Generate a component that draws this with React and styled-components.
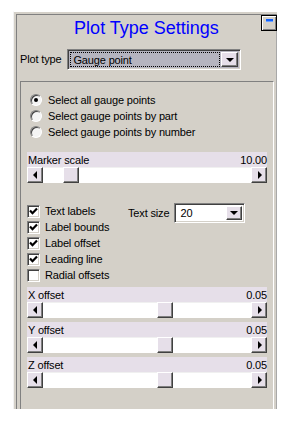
import React from "react";
import styled, { createGlobalStyle } from "styled-components";

const GlobalStyle = createGlobalStyle`
  html, body {
    margin: 0;
    padding: 0;
    background: #ffffff;
  }
  body {
    font-family: "Liberation Sans", Arial, sans-serif;
    font-size: 11px;
    letter-spacing: -0.15px;
    color: #000000;
  }
`;

const cinza = "#d4d0c8";
const lilas = "#e6dfe9";

const Janela = styled.div`
  margin: 11px 0 0 13px;
  width: 265px;
  height: 398px;
  box-sizing: border-box;
  border-top: 1px solid #ffffff;
  border-left: 1px solid #f2f2f2;
  border-right: 1px solid #ffffff;
  padding: 2px 0 0 2px;
  background: ${cinza};
  display: flex;
  flex-direction: column;
  overflow: hidden;
`;

const Interior = styled.div`
  flex: 1;
  display: flex;
  flex-direction: column;
  border-top: 1px solid #808080;
  border-left: 1px solid #808080;
  border-right: 1px solid #a8a8a8;
  box-sizing: border-box;
`;

const Cabecalho = styled.div`
  position: relative;
  padding-top: 3px;
  text-align: center;
`;

const Titulo = styled.h1`
  margin: 0;
  font-size: 18px;
  line-height: 21px;
  font-weight: normal;
  letter-spacing: 0;
  color: #0000ff;
`;

const BotaoMinimizar = styled.button`
  position: absolute;
  top: 0;
  right: -1px;
  width: 16px;
  height: 16px;
  padding: 0;
  box-sizing: border-box;
  border: 1px solid #000000;
  background: ${cinza};
  box-shadow: inset 1px 1px 0 #ffffff, inset -1px -1px 0 #808080;
  display: flex;
  justify-content: center;
  align-items: flex-start;

  &::after {
    content: "";
    display: block;
    margin-top: 3px;
    width: 7px;
    height: 3px;
    background: #1060ff;
    box-shadow: inset 0 -1px 0 #6aa0ff;
  }
`;

const LinhaTipo = styled.div`
  display: flex;
  align-items: center;
  gap: 6px;
  margin-top: 10px;
  padding-left: 3px;
`;

const Rotulo = styled.span`
  white-space: nowrap;
  line-height: 13px;
`;

const Combo = styled.div`
  display: flex;
  align-items: stretch;
  width: ${(p) => p.$largura}px;
  height: ${(p) => p.$altura}px;
  box-sizing: border-box;
  border-top: 1px solid #808080;
  border-left: 1px solid #808080;
  border-right: 1px solid #ffffff;
  border-bottom: 1px solid #ffffff;
  box-shadow: inset 1px 1px 0 #404040, inset -1px -1px 0 ${cinza};
  background: ${(p) => (p.$selecionado ? "#b5b4bf" : "#ffffff")};
  padding: 2px;
`;

const ComboTexto = styled.div`
  flex: 1;
  display: flex;
  align-items: center;
  padding-left: 2px;
  margin-right: 1px;
  border: 1px dotted ${(p) => (p.$foco ? "#000000" : "transparent")};
  white-space: nowrap;
`;

const BotaoSeta = styled.div`
  width: ${(p) => p.$largura || 16}px;
  flex-shrink: 0;
  box-sizing: border-box;
  background: ${lilas};
  border-top: 1px solid #ffffff;
  border-left: 1px solid #ffffff;
  border-right: 1px solid #404040;
  border-bottom: 1px solid #404040;
  box-shadow: inset -1px -1px 0 #808080;
  display: flex;
  align-items: center;
  justify-content: center;
`;

const SetaBaixo = styled.span`
  width: 0;
  height: 0;
  border-left: 4px solid transparent;
  border-right: 4px solid transparent;
  border-top: 4px solid #000000;
`;

const Grupo = styled.div`
  flex: 1;
  margin: 11px 0 0 3px;
  width: 254px;
  box-sizing: border-box;
  border-top: 1px solid #808080;
  border-left: 1px solid #808080;
  border-right: 1px solid #ffffff;
  display: flex;
  flex-direction: column;
`;

const ListaRadios = styled.div`
  display: flex;
  flex-direction: column;
  padding: 10px 0 0 9px;
`;

const LinhaOpcao = styled.label`
  display: flex;
  align-items: center;
  height: 16px;
  gap: ${(p) => p.$gap}px;
  white-space: nowrap;
`;

const Radio = styled.span`
  width: 12px;
  height: 12px;
  box-sizing: border-box;
  border-radius: 50%;
  background: #f4f4f4;
  border: 1px solid;
  border-color: #808080 #ffffff #ffffff #808080;
  box-shadow: inset 1px 1px 0 #404040;
  display: flex;
  align-items: center;
  justify-content: center;

  &::after {
    content: "";
    width: 4px;
    height: 4px;
    border-radius: 50%;
    background: ${(p) => (p.$marcado ? "#000000" : "transparent")};
  }
`;

const Caixa = styled.span`
  width: 13px;
  height: 13px;
  box-sizing: border-box;
  background: #ffffff;
  border: 1px solid;
  border-color: #808080 #ffffff #ffffff #808080;
  box-shadow: inset 1px 1px 0 #404040, inset -1px -1px 0 ${cinza};
  display: flex;
  align-items: center;
  justify-content: center;
`;

const Deslizador = styled.div`
  margin: ${(p) => p.$topo}px 0 0 6px;
  width: 240px;
`;

const Faixa = styled.div`
  display: flex;
  justify-content: space-between;
  align-items: flex-end;
  height: 15px;
  background: ${lilas};
  line-height: 13px;
  padding-left: 1px;
`;

const Barra = styled.div`
  display: flex;
  height: 16px;
  background: #ffffff;
`;

const Trilho = styled.div`
  flex: 1;
  position: relative;
  border-top: 1px solid #f0f0f0;
`;

const Polegar = styled.div`
  position: absolute;
  top: -1px;
  width: 16px;
  height: 16px;
  box-sizing: border-box;
  background: ${lilas};
  border-top: 1px solid #ffffff;
  border-left: 1px solid #ffffff;
  border-right: 1px solid #404040;
  border-bottom: 1px solid #404040;
  box-shadow: inset -1px -1px 0 #808080;
`;

const SetaLado = styled.span`
  width: 0;
  height: 0;
  border-top: 4px solid transparent;
  border-bottom: 4px solid transparent;
  ${(p) =>
    p.$direita
      ? "border-left: 4px solid #000000; margin-left: 1px;"
      : "border-right: 4px solid #000000;"}
`;

const AreaOpcoes = styled.div`
  display: flex;
  margin: 20px 0 0 6px;
`;

const ListaCaixas = styled.div`
  width: 101px;
  display: flex;
  flex-direction: column;
`;

const TamanhoTexto = styled.div`
  display: flex;
  align-items: center;
  gap: 5px;
  height: 20px;
`;

function Marca() {
  return (
    <svg width="9" height="9" viewBox="0 0 9 9">
      <path d="M1 3.5 L3.5 6.2 L8 1.5" fill="none" stroke="#000" strokeWidth="2.2" />
    </svg>
  );
}

function BarraDeslizante({ rotulo, valor, posicao, topo }) {
  return (
    <Deslizador $topo={topo}>
      <Faixa>
        <span>{rotulo}</span>
        <span>{valor}</span>
      </Faixa>
      <Barra>
        <BotaoSeta>
          <SetaLado />
        </BotaoSeta>
        <Trilho>
          <Polegar style={{ left: posicao }} />
        </Trilho>
        <BotaoSeta>
          <SetaLado $direita />
        </BotaoSeta>
      </Barra>
    </Deslizador>
  );
}

const radios = [
  { texto: "Select all gauge points", marcado: true },
  { texto: "Select gauge points by part", marcado: false },
  { texto: "Select gauge points by number", marcado: false },
];

const caixas = [
  { texto: "Text labels", marcado: true },
  { texto: "Label bounds", marcado: true },
  { texto: "Label offset", marcado: true },
  { texto: "Leading line", marcado: true },
  { texto: "Radial offsets", marcado: false },
];

const offsets = ["X offset", "Y offset", "Z offset"];

function App() {
  return (
    <>
      <GlobalStyle />
      <Janela>
        <Interior>
          <Cabecalho>
            <Titulo>Plot Type Settings</Titulo>
            <BotaoMinimizar aria-label="Minimize" />
          </Cabecalho>

          <LinhaTipo>
            <Rotulo>Plot type</Rotulo>
            <Combo $largura={174} $altura={21} $selecionado>
              <ComboTexto $foco>Gauge point</ComboTexto>
              <BotaoSeta $largura={17}>
                <SetaBaixo />
              </BotaoSeta>
            </Combo>
          </LinhaTipo>

          <Grupo>
            <ListaRadios>
              {radios.map((r) => (
                <LinhaOpcao key={r.texto} $gap={6}>
                  <Radio $marcado={r.marcado} />
                  <span>{r.texto}</span>
                </LinhaOpcao>
              ))}
            </ListaRadios>

            <BarraDeslizante rotulo="Marker scale" valor="10.00" posicao={20} topo={12} />

            <AreaOpcoes>
              <ListaCaixas>
                {caixas.map((c) => (
                  <LinhaOpcao key={c.texto} $gap={5}>
                    <Caixa>{c.marcado && <Marca />}</Caixa>
                    <span>{c.texto}</span>
                  </LinhaOpcao>
                ))}
              </ListaCaixas>
              <TamanhoTexto>
                <Rotulo>Text size</Rotulo>
                <Combo $largura={71} $altura={20}>
                  <ComboTexto>20</ComboTexto>
                  <BotaoSeta $largura={16}>
                    <SetaBaixo />
                  </BotaoSeta>
                </Combo>
              </TamanhoTexto>
            </AreaOpcoes>

            {offsets.map((o) => (
              <BarraDeslizante key={o} rotulo={o} valor="0.05" posicao={114} topo={4} />
            ))}
          </Grupo>
        </Interior>
      </Janela>
    </>
  );
}

export default App;
